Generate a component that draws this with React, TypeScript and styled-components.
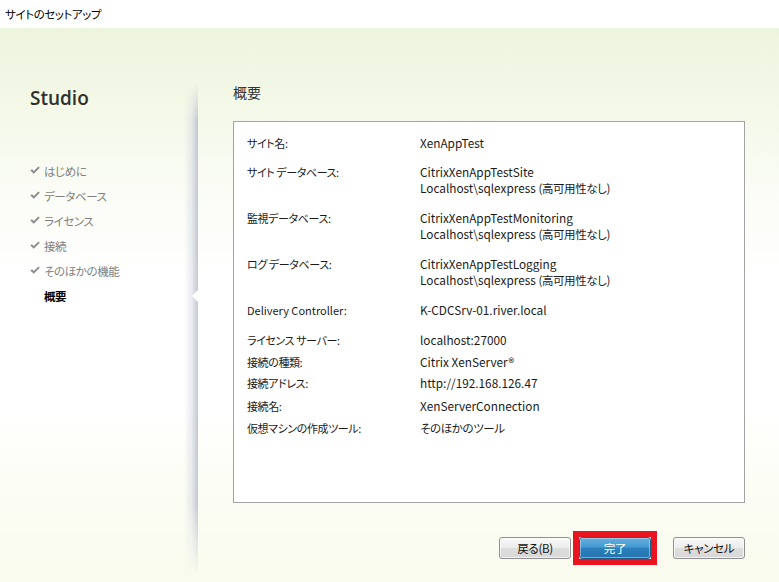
import React from "react";
import styled, { createGlobalStyle, css } from "styled-components";

const GlobalStyle = createGlobalStyle`
  html, body { margin: 0; padding: 0; }
  body {
    font-family: "Noto Sans CJK JP", "Noto Sans", sans-serif;
    font-feature-settings: "palt";
    color: #1a1a1a;
  }
`;

const jaText = css`
  font-size: 11px;
  letter-spacing: -0.4px;
`;

const Window = styled.div`
  width: 779px;
  height: 582px;
  display: flex;
  flex-direction: column;
  overflow: hidden;
  background: #fff;
`;

const TitleBar = styled.div`
  height: 28px;
  flex: 0 0 28px;
  display: flex;
  align-items: center;
  padding-left: 5px;
  ${jaText};
  font-size: 11.5px;
  color: #000;
  background: #fff;
`;

const Body = styled.div`
  flex: 1;
  display: flex;
  background: linear-gradient(
    to bottom,
    #edf4de 0px,
    #f3f8e7 70px,
    #fafcf5 160px,
    #ffffff 250px,
    #ffffff 380px,
    #fcfdf5 450px,
    #f9fbee 554px
  );
`;

const Sidebar = styled.aside`
  position: relative;
  width: 198px;
  flex: 0 0 198px;
  display: flex;
  flex-direction: column;

  &::after {
    content: "";
    position: absolute;
    right: 0;
    top: 56px;
    bottom: 8px;
    width: 14px;
    background: linear-gradient(
      to right,
      rgba(200, 205, 214, 0) 0%,
      rgba(214, 218, 225, 0.55) 55%,
      #c2c7d0 100%
    );
    -webkit-mask-image: linear-gradient(to bottom, transparent 0, #000 36px, #000 86%, transparent 100%);
    mask-image: linear-gradient(to bottom, transparent 0, #000 36px, #000 86%, transparent 100%);
  }
`;

const Brand = styled.div`
  margin-top: 58px;
  padding-left: 30px;
  font-family: "Open Sans", "Noto Sans", sans-serif;
  font-weight: 600;
  font-size: 19px;
  line-height: 24px;
  color: #2f2f2f;
`;

const NavList = styled.ul`
  list-style: none;
  margin: 48px 0 0 0;
  padding: 0;
`;

const NavItem = styled.li<{ $active?: boolean }>`
  position: relative;
  height: 25px;
  display: flex;
  align-items: center;
  gap: 4px;
  padding-left: 30px;
  ${jaText};
  font-size: 11.5px;
  color: #7f7f7f;

  ${(p) =>
    p.$active &&
    css`
      padding-left: 44px;
      color: #000;
      font-weight: 700;

      &::after {
        content: "";
        position: absolute;
        z-index: 2;
        right: 0;
        top: 50%;
        margin-top: -6px;
        width: 0;
        height: 0;
        border-top: 6px solid transparent;
        border-bottom: 6px solid transparent;
        border-right: 6px solid #ffffff;
      }
    `}
`;

const CheckIcon = () => (
  <svg width="10" height="9" viewBox="0 0 10 9" aria-hidden="true">
    <path d="M0.3 4.6 L2 3.2 L3.8 5 L8.4 0.4 L9.8 1.8 L3.8 7.8 Z" fill="#8d8d8d" />
  </svg>
);

const Main = styled.main`
  flex: 1;
  display: flex;
  flex-direction: column;
  padding: 0 34px 0 35px;
`;

const Heading = styled.h2`
  margin: 56px 0 0 0;
  font-size: 14px;
  line-height: 16px;
  font-weight: 400;
  color: #333;
`;

const SummaryBox = styled.div`
  box-sizing: border-box;
  margin-top: 21px;
  height: 382px;
  border: 1px solid #a3a3a3;
  background: #fff;
  padding: 13px 13px;
`;

const Row = styled.div<{ $gap: number }>`
  display: grid;
  grid-template-columns: 173px 1fr;
  font-size: 11.8px;
  line-height: 16px;
  margin-bottom: ${(p) => p.$gap}px;
  color: #1a1a1a;
`;

const Label = styled.div<{ $ja: boolean }>`
  font-size: 11px;
  ${(p) => p.$ja && jaText};
`;

const Value = styled.div`
  display: flex;
  flex-direction: column;
`;

const Ja = styled.span`
  ${jaText};
  font-size: 11.5px;
`;

const ButtonRow = styled.div`
  margin-top: 34px;
  display: flex;
  justify-content: flex-end;
  align-items: center;
`;

const Highlight = styled.span`
  display: inline-flex;
  border: 6px solid #e8141f;
  margin: -6px -6px -6px 2px;
`;

const Button = styled.button<{ $primary?: boolean; $spaceLeft?: number }>`
  box-sizing: border-box;
  width: 72px;
  height: 22px;
  margin-left: ${(p) => p.$spaceLeft ?? 0}px;
  padding: 0;
  border-radius: 3px;
  font-family: "Noto Sans CJK JP", sans-serif;
  font-feature-settings: "palt";
  font-size: 11.5px;
  letter-spacing: -0.3px;
  line-height: 20px;
  color: #111;
  border: 1px solid #8f8f8f;
  background: linear-gradient(to bottom, #f8f8f8 0%, #ececec 50%, #dddddd 51%, #d8d8d8 100%);
  box-shadow: inset 0 0 0 1px rgba(255, 255, 255, 0.7);

  ${(p) =>
    p.$primary &&
    css`
      color: #fff;
      border: 1px solid #1d5a86;
      background: linear-gradient(to bottom, #66aedd 0%, #449bd2 45%, #2b80bd 52%, #2473ad 100%);
      box-shadow: inset 0 0 0 1px rgba(190, 225, 245, 0.55);
    `}
`;

type Entry = { label: string; value: string[]; gap: number };

const entries: Entry[] = [
  { label: "サイト名:", value: ["XenAppTest"], gap: 13 },
  { label: "サイト データベース:", value: ["CitrixXenAppTestSite", "Localhost\\sqlexpress |(高可用性なし)"], gap: 14 },
  { label: "監視データベース:", value: ["CitrixXenAppTestMonitoring", "Localhost\\sqlexpress |(高可用性なし)"], gap: 14 },
  { label: "ログ データベース:", value: ["CitrixXenAppTestLogging", "Localhost\\sqlexpress |(高可用性なし)"], gap: 14 },
  { label: "Delivery Controller:", value: ["K-CDCSrv-01.river.local"], gap: 14 },
  { label: "ライセンス サーバー:", value: ["localhost:27000"], gap: 6 },
  { label: "接続の種類:", value: ["Citrix XenServer®"], gap: 5 },
  { label: "接続アドレス:", value: ["http://192.168.126.47"], gap: 7 },
  { label: "接続名:", value: ["XenServerConnection"], gap: 6 },
  { label: "仮想マシンの作成ツール:", value: ["|そのほかのツール"], gap: 0 },
];

const steps = ["はじめに", "データベース", "ライセンス", "接続", "そのほかの機能"];

const isJa = (s: string) => /[\u3040-\u30ff\u4e00-\u9fff]/.test(s);

const renderValue = (v: string) => {
  const [latin, ja] = v.split("|");
  return (
    <span key={v}>
      {latin}
      {ja !== undefined && <Ja>{ja}</Ja>}
    </span>
  );
};

export default function App() {
  return (
    <>
      <GlobalStyle />
      <Window>
        <TitleBar>サイトのセットアップ</TitleBar>
        <Body>
          <Sidebar>
            <Brand>Studio</Brand>
            <NavList>
              {steps.map((s) => (
                <NavItem key={s}>
                  <CheckIcon />
                  <span>{s}</span>
                </NavItem>
              ))}
              <NavItem $active>概要</NavItem>
            </NavList>
          </Sidebar>
          <Main>
            <Heading>概要</Heading>
            <SummaryBox>
              {entries.map((e) => (
                <Row key={e.label} $gap={e.gap}>
                  <Label $ja={isJa(e.label)}>{e.label}</Label>
                  <Value>{e.value.map(renderValue)}</Value>
                </Row>
              ))}
            </SummaryBox>
            <ButtonRow>
              <Button>戻る(B)</Button>
              <Highlight>
                <Button $primary>完了</Button>
              </Highlight>
              <Button $spaceLeft={22}>キャンセル</Button>
            </ButtonRow>
          </Main>
        </Body>
      </Window>
    </>
  );
}
